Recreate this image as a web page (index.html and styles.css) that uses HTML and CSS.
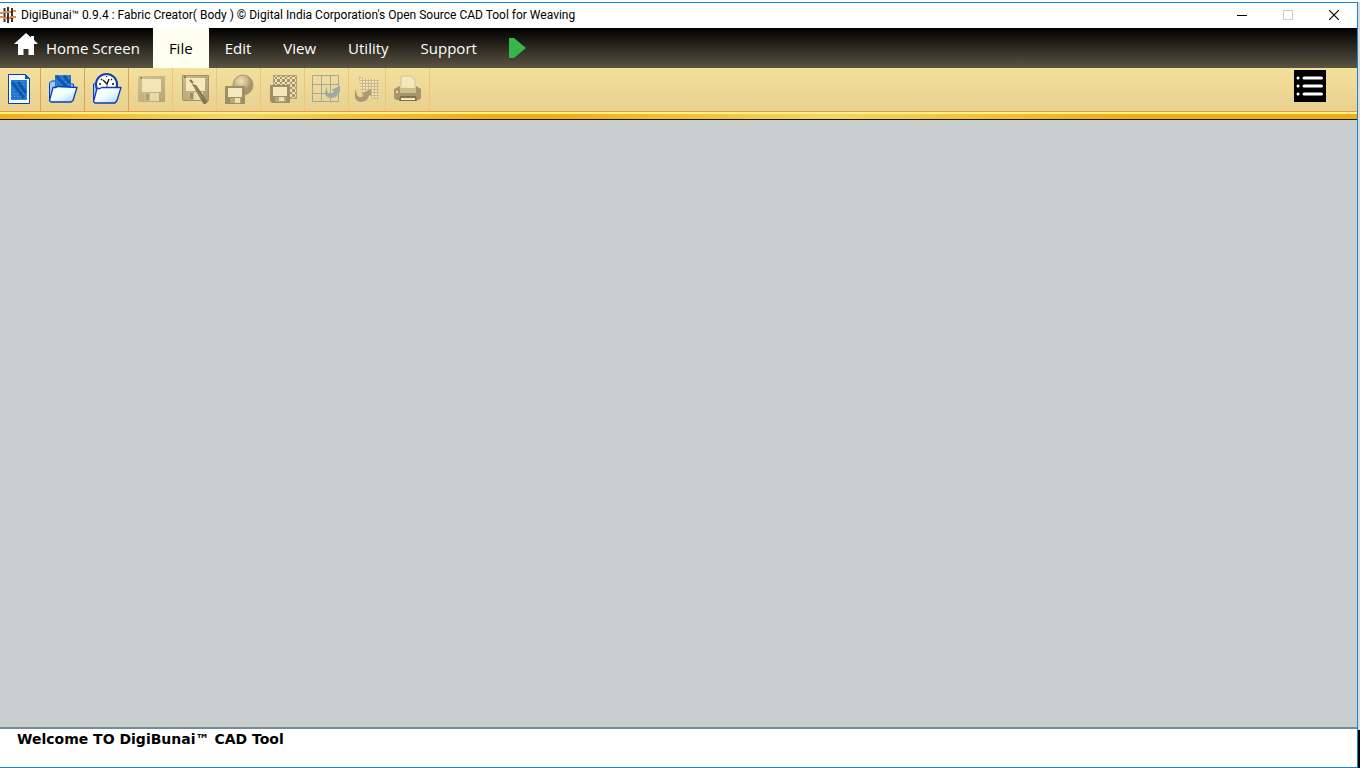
FILE: index.html
```html
<!DOCTYPE html>
<html lang="en">
<head>
    <meta charset="UTF-8">
    <meta name="viewport" content="width=device-width, initial-scale=1.0">
    <title>DigiBunai - Fabric Creator</title>
    <link rel="stylesheet" href="styles.css">
</head>
<body>
    <div class="window">
        <header class="title-bar">
            <svg class="app-icon" viewBox="0 0 16 16" width="16" height="16">
                <path d="M0 6h3M6 5h5M13 4h3M0 10h3M5 11h6M13 10h3" stroke="#e08a45" stroke-width="2"/>
                <path d="M4.500 1v14M8 0v16M12 1v14" stroke="#3b3030" stroke-width="2"/>
                <path d="M3 11h3M7 5h2M10 10h4M3 5h2" stroke="#e08a45" stroke-width="2"/>
            </svg>
            <h1 class="title">DigiBunai™ 0.9.4 : Fabric Creator( Body ) © Digital India Corporation's Open Source CAD Tool for Weaving</h1>
            <button class="win-btn" aria-label="Minimize"><svg viewBox="0 0 10 10" width="10" height="10"><path d="M0 5.500h10" stroke="#000"/></svg></button>
            <button class="win-btn" aria-label="Maximize" disabled><svg viewBox="0 0 10 10" width="10" height="10"><path d="M.5.5h9v9h-9z" fill="none" stroke="#ccc"/></svg></button>
            <button class="win-btn" aria-label="Close"><svg viewBox="0 0 10 10" width="10" height="10"><path d="M0 0l10 10M10 0L0 10" stroke="#000" stroke-width="1.200"/></svg></button>
        </header>

        <nav class="menu">
            <button class="menu-item home">
                <svg viewBox="0 0 24 22" width="24" height="22"><path d="M12 0L0 11h4v11h5.500v-6h5v6H20V11h4l-4-4V3h-3v1.500z" fill="#fff"/></svg>
                Home Screen
            </button>
            <button class="menu-item active">File</button>
            <button class="menu-item">Edit</button>
            <button class="menu-item">View</button>
            <button class="menu-item">Utility</button>
            <button class="menu-item">Support</button>
            <button class="menu-item" aria-label="Run"><svg viewBox="0 0 17 20" width="17" height="20"><path d="M0 0h5l12 10L5 20H0z" fill="#39b54a"/></svg></button>
        </nav>

        <div class="toolbar">
            <button class="tool" aria-label="New">
                <svg viewBox="0 0 32 32" width="32" height="32">
                    <defs>
                        <pattern id="weave" width="3" height="3" patternUnits="userSpaceOnUse">
                            <path d="M0 0h3v3H0z" fill="#2277d2"/>
                            <path d="M0 0h1v1H0z" fill="#4a97e6"/>
                        </pattern>
                        <linearGradient id="folder" x2="1" y2="1"><stop offset="0" stop-color="#fff"/><stop offset=".5" stop-color="#f2fdff"/><stop offset="1" stop-color="#9fd4f8"/></linearGradient>
                    </defs>
                    <path d="M3.500 2.500h17l4 4v25h-21z" fill="#f6fbff" stroke="#0a3cc0"/>
                    <path d="M20 2v5h5z" fill="#0a55c8"/>
                    <path d="M6 8h16v20H6z" fill="url(#weave)"/>
                    <path d="M7 10l12 16M13 10l8 11" stroke="#0f56a8" stroke-width="3"/>
                </svg>
            </button>
            <button class="tool" aria-label="Open">
                <svg viewBox="0 0 32 32" width="32" height="32">
                    <path d="M2.500 28V11l2-2h5l2 3h15v6" fill="#9cccf6" stroke="#0a3cc0"/>
                    <path d="M8 3h16v13H8z" fill="url(#weave)"/>
                    <path d="M9 4l12 12M17 4l6 7" stroke="#0f56a8" stroke-width="3"/>
                    <path d="M2.500 28.500L6 15.500h3l2-1 19 1-4 13-2 1.500H4z" fill="url(#folder)" stroke="#0a3cc0" stroke-width="1.300" stroke-linejoin="round"/>
                </svg>
            </button>
            <button class="tool" aria-label="Recent">
                <svg viewBox="0 0 32 32" width="32" height="32">
                    <path d="M2.500 28V12l3-1h21v6" fill="#9cccf6" stroke="#0a3cc0"/>
                    <circle cx="15.500" cy="12.500" r="10.500" fill="#fff" stroke="#123fb2" stroke-width="2"/>
                    <path d="M12 8l4 4 2-5M15.500 4v1M8 12h2M21 12h2M10 7l1 1M21 7l-1 1" fill="none" stroke="#111" stroke-width="1.300"/>
                    <path d="M16 13v3" stroke="#d33"/>
                    <path d="M2.500 29.500L6 16.500h3l2-1 19 0-4 13-2 2.500H4z" fill="url(#folder)" stroke="#0a3cc0" stroke-width="1.300" stroke-linejoin="round"/>
                </svg>
            </button>
            <button class="tool" aria-label="Save" disabled>
                <svg viewBox="0 0 32 32" width="32" height="32">
                    <defs>
                        <linearGradient id="shell" x2="1" y2="1"><stop offset="0" stop-color="#cdbd90"/><stop offset="1" stop-color="#aa996d"/></linearGradient>
                        <g id="floppy">
                            <path d="M0 0h27v26H1l-1-1z" fill="url(#shell)"/>
                            <path d="M4 3h19v13H4z" fill="#f5e8bd"/>
                            <path d="M2 1h2v2H2z" fill="#8c7b54"/>
                            <path d="M6 17h15v8H6z" fill="#c3b286"/>
                            <path d="M12 17h9v8h-9z" fill="#e9dbae"/>
                            <path d="M8 18h3v6H8z" fill="#a08e64"/>
                        </g>
                    </defs>
                    <use href="#floppy" x="3" y="4" opacity=".8"/>
                </svg>
            </button>
            <button class="tool" aria-label="Save As" disabled>
                <svg viewBox="0 0 32 32" width="32" height="32">
                    <use href="#floppy" x="3" y="3"/>
                    <path d="M3.500 3.500h26v25h-25l-1-1z" fill="none" stroke="#a39168"/>
                    <path d="M11 8l3 3" stroke="#82714c" stroke-width="2"/>
                    <path d="M13 12l4 1 12 17-4 3z" fill="#857550"/>
                    <path d="M15 14l8 12" stroke="#a3926a"/>
                </svg>
            </button>
            <button class="tool" aria-label="Export Texture" disabled>
                <svg viewBox="0 0 32 32" width="32" height="32">
                    <defs><radialGradient id="ball" cx=".4" cy=".3"><stop offset="0" stop-color="#efe2b5"/><stop offset=".6" stop-color="#cbbb8c"/><stop offset="1" stop-color="#a5946b"/></radialGradient></defs>
                    <circle cx="20" cy="13" r="10" fill="url(#ball)" stroke="#a89770"/>
                    <path d="M2 14h20v18H2z" fill="#a08e64"/>
                    <path d="M5 16h14v9H5z" fill="#f5e8bd"/>
                    <path d="M7 26h11v5H7z" fill="#b9a87c"/>
                    <path d="M12 26h5v5h-5z" fill="#efe0b2"/>
                </svg>
            </button>
            <button class="tool" aria-label="Export Grid" disabled>
                <svg viewBox="0 0 32 32" width="32" height="32">
                    <defs><pattern id="checks" width="5" height="5" patternUnits="userSpaceOnUse"><path d="M0 0h5v5H0z" fill="#a5946a"/><path d="M0 0h3v2H0zM3 2h2v3H3z" fill="#f0e2b5"/></pattern></defs>
                    <path d="M6 3h24v24H6z" fill="url(#checks)"/>
                    <path d="M6.500 3.500h23v23h-23z" fill="none" stroke="#b3a277"/>
                    <path d="M3 13h20v18H5l-2-2z" fill="#a08e64"/>
                    <path d="M6 15h14v9H6z" fill="#f5e8bd"/>
                    <path d="M8 25h11v5H8z" fill="#b9a87c"/>
                    <path d="M12 25h5v4h-5z" fill="#efe0b2"/>
                </svg>
            </button>
            <button class="tool" aria-label="Graph" disabled>
                <svg viewBox="0 0 32 32" width="32" height="32">
                    <path d="M1.500 3.500h26v26h-26zM10.500 3v27M19.500 3v27M1 12.500h27M1 21.500h27" fill="none" stroke="#9ca8a3"/>
                    <path d="M16 14c-4 8-1 12 4 12 5 0 7-3 8-6h1v-6l-9 4 3 1c-2 4-8 5-7-5z" fill="#9caaa6"/>
                </svg>
            </button>
            <button class="tool narrow" aria-label="Fabric" disabled>
                <svg viewBox="0 0 32 32" width="32" height="32">
                    <defs><pattern id="mesh" width="3" height="3" patternUnits="userSpaceOnUse"><path d="M0 0h3v3H0z" fill="#c9b98b"/><path d="M0 0h2v2H0z" fill="#f0e2b5"/></pattern></defs>
                    <path d="M8 4c5 3 10 3 20 3v21l-9-2-9-3z" fill="url(#mesh)"/>
                    <path d="M5 17c-3 8 0 13 5 13 5 0 8-4 8-7h2v-6l-10 5 3 1c-2 3-8 4-8-6z" fill="#aa9971"/>
                </svg>
            </button>
            <button class="tool" aria-label="Print" disabled>
                <svg viewBox="0 0 32 32" width="32" height="32">
                    <path d="M9 15V5l2-1h8l4 4v8" fill="#f5e8bd" stroke="#d3c497"/>
                    <path d="M2 17l6-3v3h16v-3l5 3v9l-2 2H4l-2-2z" fill="#a6956c"/>
                    <path d="M8 16h16v5H8z" fill="#cebe90"/>
                    <path d="M4 19h2v2H4z" fill="#efe0b2"/>
                    <path d="M8 24h16l1 5H7z" fill="#84734e"/>
                    <path d="M9 26h14v2H9z" fill="#f5e8bd"/>
                </svg>
            </button>
            <button class="list-btn" aria-label="List">
                <svg viewBox="0 0 32 32" width="32" height="32">
                    <path d="M0 0h32v32H0z" fill="#000"/>
                    <path d="M10 8h17.500M10 16h17.500M10 24h17.500M4 8h.1M4 16h.1M4 24h.1" stroke="#fff" stroke-width="3" stroke-linecap="round"/>
                </svg>
            </button>
        </div>
        <div class="gold-bar"></div>

        <main class="workspace"></main>
        <footer class="status">Welcome TO DigiBunai™ CAD Tool</footer>
    </div>
    <div class="desktop-edge"></div>
</body>
</html>
```
FILE: styles.css
```css
* {
    box-sizing: border-box;
}
body {
    margin: 0;
    padding-top: 2px;
    height: 100vh;
    display: flex;
    background-color: #fff;
    color: #000;
    font-family: "Open Sans", "Noto Sans", sans-serif;
}
button {
    margin: 0;
    padding: 0;
    border: 0;
    background: none;
    font: inherit;
    color: inherit;
}
svg {
    display: block;
}
.window {
    flex: 1;
    display: flex;
    flex-direction: column;
    border: 1px solid #1883d7;
    border-left: 0;
}
.title-bar {
    display: flex;
    align-items: center;
    height: 25px;
    padding-bottom: 1px;
}
.title {
    flex: 1;
    margin: 0 0 0 5px;
    font-family: Roboto, sans-serif;
    font-size: 12px;
    font-weight: 400;
    white-space: nowrap;
}
.win-btn {
    display: flex;
    justify-content: center;
    width: 46px;
}
.menu {
    display: flex;
    height: 40px;
    background: linear-gradient(#000, #5a5443);
    color: #fff;
    font-size: 15px;
    font-weight: 500;
}
.menu-item {
    display: flex;
    align-items: center;
    padding: 0 16px;
}
.home {
    gap: 8px;
    padding: 0 13px 0 14px;
}
.home svg {
    margin-bottom: 8px;
}
.active {
    background-color: #fffff0;
    color: #000;
}
.toolbar {
    display: flex;
    height: 44px;
    background: linear-gradient(#f3e09c, #e9d08e);
    border-bottom: 1px solid #dc9c48;
}
.tool {
    display: flex;
    justify-content: center;
    align-items: center;
    width: 44px;
    padding-bottom: 3px;
    border-right: 1px solid #e0a050;
}
.tool:first-child {
    width: 41px;
    padding-left: 2px;
}
.tool:disabled {
    border-right-color: #ecc482;
}
.tool.narrow {
    width: 37px;
}
.list-btn {
    align-self: flex-start;
    margin: 2px 31px 0 auto;
}
.gold-bar {
    height: 8px;
    border-top: 2px solid #fff08a;
    border-bottom: 1px solid #1c1a10;
    background: linear-gradient(90deg, #efae17, #f7d563 17%, #f0ac14 36%, #f0ac14 41%, #f7d563 61%, #f0ac14 83%);
}
.workspace {
    flex: 1;
    background-color: #c9cfcf;
}
.status {
    height: 40px;
    padding: 1px 17px;
    border-top: 2px solid #788a98;
    font-family: "DejaVu Sans", sans-serif;
    font-size: 14px;
    font-weight: 700;
    line-height: 18px;
}
.desktop-edge {
    width: 8px;
    background: linear-gradient(#dcdcdc 728px, #000 728px) no-repeat 0 0 / 2px 100%;
}
```
